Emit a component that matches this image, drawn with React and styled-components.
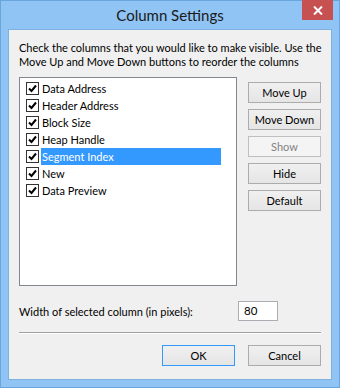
import React from "react"
import styled, { createGlobalStyle } from "styled-components"

const GlobalStyle = createGlobalStyle`
  html, body {
    margin: 0;
    padding: 0;
    background: #8fc4f4;
  }
  body {
    font-family: Lato, "Noto Sans", sans-serif;
    font-size: 11px;
    color: #000;
  }
`

const Window = styled.div`
  width: 340px;
  height: 388px;
  box-sizing: border-box;
  background: #8fc4f4;
  border: 1px solid #6aa6de;
  display: flex;
  flex-direction: column;
`

const TitleBar = styled.div`
  height: 28px;
  display: flex;
  align-items: center;
  justify-content: center;
  position: relative;
  font-size: 15px;
  color: #1a1a1a;
`

const CloseButton = styled.div`
  position: absolute;
  top: -1px;
  right: 6px;
  width: 31px;
  height: 20px;
  background: #c75050;
  display: flex;
  align-items: center;
  justify-content: center;
`

const Client = styled.div`
  margin: 0 7px 0 7px;
  height: 351px;
  box-sizing: border-box;
  background: #f0f0f0;
  border: 1px solid #7fb0de;
  padding: 11px 10px 0 10px;
  display: flex;
  flex-direction: column;
`

const Intro = styled.p`
  margin: 0;
  line-height: 14px;
  white-space: nowrap;
`

const Middle = styled.div`
  margin-top: 8px;
  display: flex;
  justify-content: space-between;
`

const ListBox = styled.div`
  width: 218px;
  height: 209px;
  box-sizing: border-box;
  background: #fff;
  border: 1px solid #828790;
  padding: 2px 0 0 6px;
`

const Row = styled.div`
  height: 17px;
  display: flex;
  align-items: center;
`

const Box = styled.span`
  width: 13px;
  height: 13px;
  box-sizing: border-box;
  border: 1px solid #333;
  background: #fff;
  display: flex;
  align-items: center;
  justify-content: center;
  flex: none;
`

const Label = styled.span`
  margin-left: 2px;
  width: 180px;
  height: 17px;
  line-height: 17px;
  padding-left: 1px;
  box-sizing: border-box;
  background: ${p => (p.$selected ? "#3399ff" : "transparent")};
  color: ${p => (p.$selected ? "#fff" : "#000")};
`

const Buttons = styled.div`
  margin-top: 5px;
  display: flex;
  flex-direction: column;
  gap: 6px;
`

const Button = styled.button`
  width: 73px;
  height: 21px;
  box-sizing: border-box;
  padding: 0;
  font-family: inherit;
  font-size: 11px;
  color: ${p => (p.disabled ? "#838383" : "#000")};
  border: 1px solid ${p => (p.disabled ? "#bfbfbf" : p.$default ? "#3399ff" : "#acacac")};
  background: ${p =>
    p.disabled ? "#f4f4f4" : "linear-gradient(#f0f0f0, #e5e5e5)"};
`

const WidthRow = styled.div`
  margin-top: 15px;
  display: flex;
  align-items: center;
  justify-content: space-between;
  width: 259px;
`

const WidthInput = styled.div`
  width: 40px;
  height: 20px;
  box-sizing: border-box;
  border: 1px solid #abadb3;
  background: #fff;
  padding-left: 5px;
  line-height: 18px;
  font-size: 11.5px;
`

const Separator = styled.div`
  margin-top: 11px;
  height: 2px;
  border-top: 1px solid #a0a0a0;
  background: #fff;
  box-sizing: border-box;
`

const Footer = styled.div`
  margin-top: 11px;
  display: flex;
  justify-content: flex-end;
  gap: 13px;
`

const columns = [
  "Data Address",
  "Header Address",
  "Block Size",
  "Heap Handle",
  "Segment Index",
  "New",
  "Data Preview",
]

const Check = () => (
  <svg width="9" height="9" viewBox="0 0 9 9">
    <path d="M1 4.5 L3.5 7 L8 1.5" fill="none" stroke="#000" strokeWidth="2" />
  </svg>
)

const App = () => (
  <>
    <GlobalStyle />
    <Window>
      <TitleBar>
        Column Settings
        <CloseButton>
          <svg width="10" height="9" viewBox="0 0 10 9">
            <path d="M1 0.5 L9 8.5 M9 0.5 L1 8.5" stroke="#fff" strokeWidth="2" />
          </svg>
        </CloseButton>
      </TitleBar>
      <Client>
        <Intro>
          Check the columns that you would like to make visible. Use the
          <br />
          Move Up and Move Down buttons to reorder the columns
        </Intro>
        <Middle>
          <ListBox>
            {columns.map(name => (
              <Row key={name}>
                <Box><Check /></Box>
                <Label $selected={name === "Segment Index"}>{name}</Label>
              </Row>
            ))}
          </ListBox>
          <Buttons>
            <Button>Move Up</Button>
            <Button>Move Down</Button>
            <Button disabled>Show</Button>
            <Button>Hide</Button>
            <Button>Default</Button>
          </Buttons>
        </Middle>
        <WidthRow>
          <span>Width of selected column (in pixels):</span>
          <WidthInput>80</WidthInput>
        </WidthRow>
        <Separator />
        <Footer>
          <Button $default>OK</Button>
          <Button>Cancel</Button>
        </Footer>
      </Client>
    </Window>
  </>
)

export default App
